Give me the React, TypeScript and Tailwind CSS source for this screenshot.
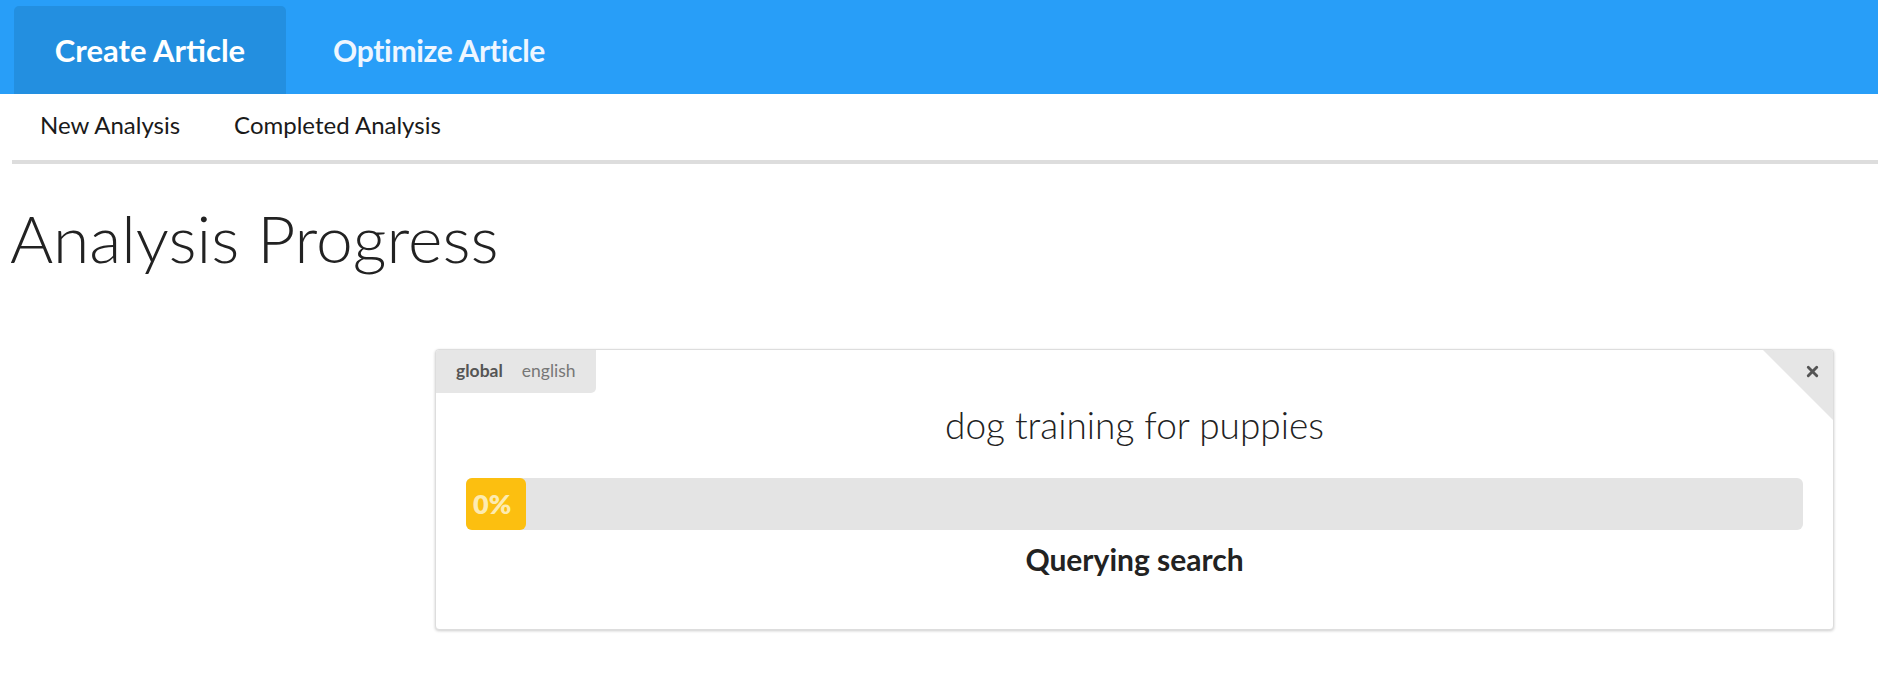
import { X } from "lucide-react";

const App = () => {
    return (
        <div className="min-h-[678px] bg-white font-['Lato',sans-serif] text-[#222]">
            <div className="h-[94px] bg-[#289ef8] flex items-end pl-[14px]">
                <div className="h-[88px] w-[272px] bg-[#238fe0] rounded-t-[5px] flex items-center justify-center text-white font-bold text-[31px]">
                    Create Article
                </div>
                <div className="h-[88px] pl-[47px] flex items-center text-[#eef6ff] font-bold text-[30px] tracking-[-0.3px]">
                    Optimize Article
                </div>
            </div>
            <div className="ml-[12px] border-b-4 border-[#dddddd] flex items-center gap-[54px] pl-[28px] pt-[16px] pb-[20px] text-[24px] leading-[30px] text-[#1a1a1a]">
                <span>New Analysis</span>
                <span>Completed Analysis</span>
            </div>
            <h1 className="mt-[38px] pl-[10px] text-[66px] leading-[72px] font-light text-[#222]">Analysis Progress</h1>
            <div className="pl-[435px] pr-[44px] mt-[75px]">
                <div className="relative border border-[#dddddd] rounded-[4px] shadow-[0_1px_3px_rgba(0,0,0,0.2)] bg-white pb-[54px]">
                    <div className="inline-flex items-center gap-[19px] h-[43px] px-[20px] bg-[#e6e6e6] rounded-br-[5px] rounded-tl-[3px] text-[17.5px]">
                        <span className="font-bold text-[#555]">global</span>
                        <span className="text-[#777]">english</span>
                    </div>
                    <div className="absolute top-0 right-0 w-[70px] h-[70px] bg-[#e6e6e6] [clip-path:polygon(0_0,100%_0,100%_100%)] rounded-tr-[3px]">
                        <X className="absolute top-[13px] right-[12px] w-[17px] h-[17px] text-[#555]" strokeWidth={4} />
                    </div>
                    <div className="mt-[12px] text-center text-[37px] leading-[40px] font-light text-[#222]">
                        dog training for puppies
                    </div>
                    <div className="mx-[30px] mt-[33px] h-[52px] bg-[#e4e4e4] rounded-[6px] flex">
                        <div className="w-[60px] h-full bg-[#fcbf10] rounded-[6px] flex items-center pl-[7px] text-[27px] font-extrabold text-[#fdebb0]">
                            0%
                        </div>
                    </div>
                    <div className="mt-[13px] text-center text-[30px] leading-[32px] font-bold text-[#222]">
                        Querying search
                    </div>
                </div>
            </div>
        </div>
    );
};

export default App;
